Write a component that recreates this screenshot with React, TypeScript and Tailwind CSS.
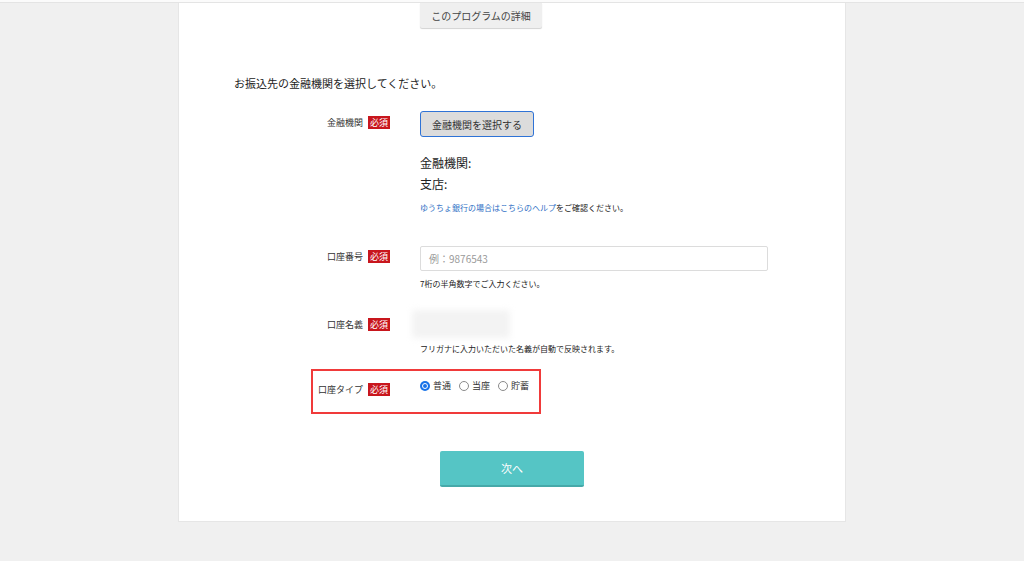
import React from "react";

const font = { fontFamily: '"Noto Sans CJK JP", "Noto Sans", sans-serif' };

function Badge() {
  return (
    <span className="ml-[5px] inline-flex h-[13px] w-[22px] items-center justify-center bg-[#c8161d] text-[9px] leading-none text-white">
      必須
    </span>
  );
}

function Label({ text, top }: { text: string; top: string }) {
  return (
    <div className="flex w-[211px] shrink-0 justify-end">
      <div className={`flex h-[13px] items-center ${top}`}>
        <span className="text-[9px] leading-none text-[#333]">{text}</span>
        <Badge />
      </div>
    </div>
  );
}

function Radio({ checked, label }: { checked?: boolean; label: string }) {
  return (
    <div className="flex items-center">
      {checked ? (
        <span className="flex h-[10px] w-[10px] items-center justify-center rounded-full bg-[#1a73e8]">
          <span className="h-[6px] w-[6px] rounded-full border border-white bg-[#1a73e8]" />
        </span>
      ) : (
        <span className="h-[10px] w-[10px] rounded-full border border-[#8a8a8a] bg-white" />
      )}
      <span className="ml-[3px] text-[9px] leading-[12px] text-[#333]">{label}</span>
    </div>
  );
}

export default function App() {
  return (
    <div className="h-[561px] overflow-hidden bg-[#f0f0f0]" style={font}>
      <div className="h-[2px] bg-[#fbfbfb]" />
      <div className="h-px bg-[#e4e4e4]" />
      <div className="mx-auto flex h-[519px] w-[668px] flex-col border-x border-b border-[#e6e6e6] bg-white">
        <div className="ml-[241px] flex h-[25px] w-[122px] items-center justify-center rounded-b-[2px] bg-[#efefef] text-[10px] text-[#444] shadow-[0_1px_1px_rgba(0,0,0,0.18)]">
          このプログラムの詳細
        </div>

        <div className="ml-[55px] mt-[47px] text-[11px] leading-[16px] text-[#222]">
          お振込先の金融機関を選択してください。
        </div>

        {/* 金融機関 */}
        <div className="mt-[20px] flex gap-[30px]">
          <Label text="金融機関" top="mt-[5px]" />
          <div className="flex flex-col">
            <div className="flex h-[26px] w-[114px] items-center justify-center rounded-[3px] border-[1.5px] border-[#2f73d6] bg-[#dcdcdc] text-[10px] text-[#333]">
              金融機関を選択する
            </div>
            <div className="mt-[15px] text-[12px] leading-[21px] text-[#222]">金融機関:</div>
            <div className="text-[12px] leading-[21px] text-[#222]">支店:</div>
            <div className="mt-[8px] text-[8px] leading-[12px] text-[#222]">
              <span className="text-[#2f6fc5]">ゆうちょ銀行の場合はこちらのヘルプ</span>をご確認ください。
            </div>
          </div>
        </div>

        {/* 口座番号 */}
        <div className="mt-[32px] flex gap-[30px]">
          <Label text="口座番号" top="mt-[4px]" />
          <div className="flex flex-col">
            <div className="flex h-[25px] w-[348px] items-center rounded-[2px] border border-[#dcdcdc] bg-white pl-[8px] text-[10px] text-[#9a9a9a]">
              例：9876543
            </div>
            <div className="mt-[7px] text-[8px] leading-[12px] text-[#222]">7桁の半角数字でご入力ください。</div>
          </div>
        </div>

        {/* 口座名義 */}
        <div className="mt-[20px] flex gap-[30px]">
          <Label text="口座名義" top="mt-[8px]" />
          <div className="flex flex-col">
            <div className="-ml-[8px] h-[28px] w-[98px] rounded-[3px] bg-[#f3f3f3] blur-[3px]" />
            <div className="mt-[5px] text-[8px] leading-[12px] text-[#222]">
              フリガナに入力いただいた名義が自動で反映されます。
            </div>
          </div>
        </div>

        {/* 口座タイプ */}
        <div className="ml-[132px] mt-[14px] flex h-[45px] w-[230px] gap-[30px] border-2 border-[#f03a3a]">
          <div className="flex w-[77px] shrink-0 justify-end">
            <div className="mt-[12px] flex h-[13px] items-center">
              <span className="text-[9px] leading-none text-[#333]">口座タイプ</span>
              <Badge />
            </div>
          </div>
          <div className="mt-[9px] flex h-[12px] items-center gap-[8px]">
            <Radio checked label="普通" />
            <Radio label="当座" />
            <Radio label="貯蓄" />
          </div>
        </div>

        <div className="mx-auto mt-[37px] flex h-[36px] w-[144px] items-center justify-center rounded-[2px] border-b-2 border-[#46a9a9] bg-[#55c5c5] text-[11px] text-white">
          次へ
        </div>
      </div>
    </div>
  );
}
